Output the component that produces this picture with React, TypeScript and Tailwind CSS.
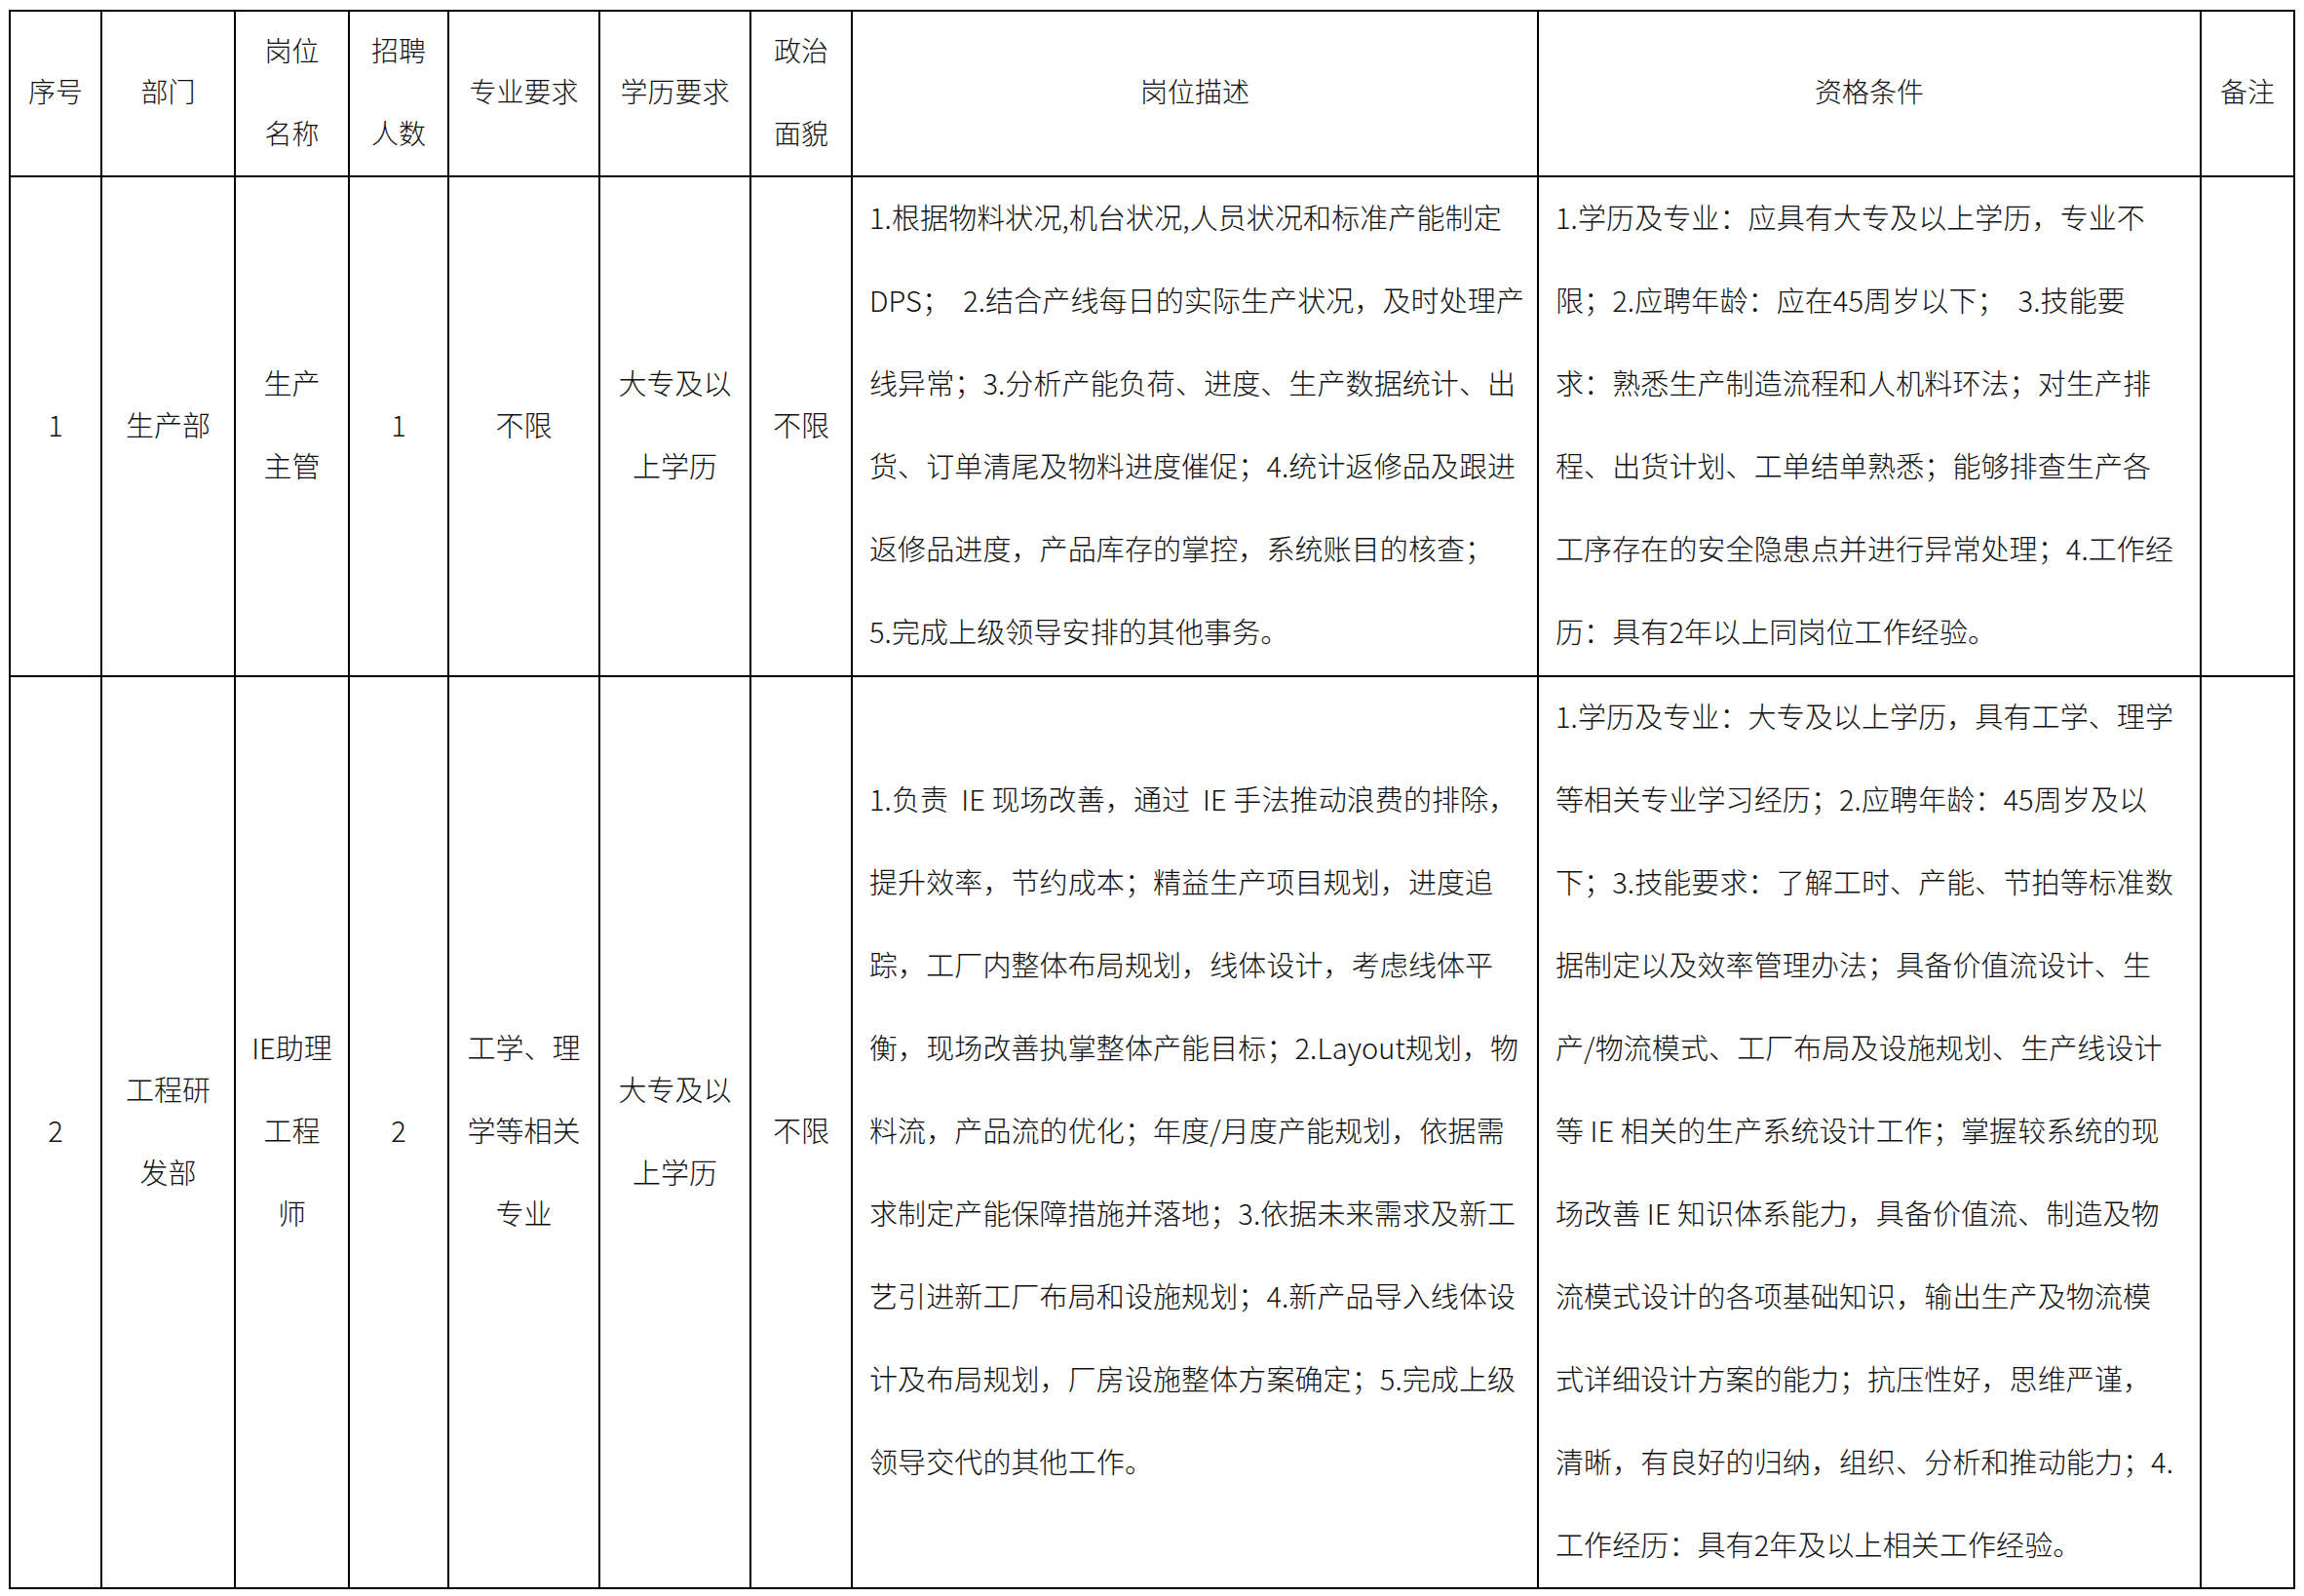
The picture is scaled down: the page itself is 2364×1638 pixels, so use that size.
const headers: { lines: string[] }[] = [
  { lines: ["序号"] },
  { lines: ["部门"] },
  { lines: ["岗位", "名称"] },
  { lines: ["招聘", "人数"] },
  { lines: ["专业要求"] },
  { lines: ["学历要求"] },
  { lines: ["政治", "面貌"] },
  { lines: ["岗位描述"] },
  { lines: ["资格条件"] },
  { lines: ["备注"] },
];

const rows = [
  {
    h: "h-[513px]",
    cells: [
      ["1"],
      ["生产部"],
      ["生产", "主管"],
      ["1"],
      ["不限"],
      ["大专及以", "上学历"],
      ["不限"],
    ],
    desc: [
      "1.根据物料状况,机台状况,人员状况和标准产能制定",
      "DPS；  2.结合产线每日的实际生产状况，及时处理产",
      "线异常；3.分析产能负荷、进度、生产数据统计、出",
      "货、订单清尾及物料进度催促；4.统计返修品及跟进",
      "返修品进度，产品库存的掌控，系统账目的核查；",
      "5.完成上级领导安排的其他事务。",
    ],
    req: [
      "1.学历及专业：应具有大专及以上学历，专业不",
      "限；2.应聘年龄：应在45周岁以下；  3.技能要",
      "求：熟悉生产制造流程和人机料环法；对生产排",
      "程、出货计划、工单结单熟悉；能够排查生产各",
      "工序存在的安全隐患点并进行异常处理；4.工作经",
      "历：具有2年以上同岗位工作经验。",
    ],
  },
  {
    h: "h-[936px]",
    cells: [
      ["2"],
      ["工程研", "发部"],
      ["IE助理", "工程", "师"],
      ["2"],
      ["工学、理", "学等相关", "专业"],
      ["大专及以", "上学历"],
      ["不限"],
    ],
    desc: [
      "1.负责  IE 现场改善，通过  IE 手法推动浪费的排除，",
      "提升效率，节约成本；精益生产项目规划，进度追",
      "踪，工厂内整体布局规划，线体设计，考虑线体平",
      "衡，现场改善执掌整体产能目标；2.Layout规划，物",
      "料流，产品流的优化；年度/月度产能规划，依据需",
      "求制定产能保障措施并落地；3.依据未来需求及新工",
      "艺引进新工厂布局和设施规划；4.新产品导入线体设",
      "计及布局规划，厂房设施整体方案确定；5.完成上级",
      "领导交代的其他工作。",
    ],
    req: [
      "1.学历及专业：大专及以上学历，具有工学、理学",
      "等相关专业学习经历；2.应聘年龄：45周岁及以",
      "下；3.技能要求：了解工时、产能、节拍等标准数",
      "据制定以及效率管理办法；具备价值流设计、生",
      "产/物流模式、工厂布局及设施规划、生产线设计",
      "等 IE 相关的生产系统设计工作；掌握较系统的现",
      "场改善 IE 知识体系能力，具备价值流、制造及物",
      "流模式设计的各项基础知识，输出生产及物流模",
      "式详细设计方案的能力；抗压性好，思维严谨，",
      "清晰，有良好的归纳，组织、分析和推动能力；4.",
      "工作经历：具有2年及以上相关工作经验。",
    ],
  },
];

function Center({ lines, className }: { lines: string[]; className?: string }) {
  return (
    <div className={`flex flex-col items-center justify-center border-r-2 border-b-2 border-black pb-[5px] ${className ?? ""}`}>
      {lines.map((l, i) => (
        <div key={i} className="whitespace-pre leading-[85px]">{l}</div>
      ))}
    </div>
  );
}

function Para({ lines, h }: { lines: string[]; h: string }) {
  return (
    <div className={`flex flex-col justify-center border-r-2 border-b-2 border-black px-[17px] pb-[5px] ${h}`}>
      {lines.map((l, i) => (
        <div key={i} className="whitespace-pre leading-[85px]">{l}</div>
      ))}
    </div>
  );
}

export default function App() {
  return (
    <div className="bg-white pt-[10px] pl-[9px] font-['Noto_Sans_CJK_SC',sans-serif] text-[#111]">
      <div className="grid w-max grid-cols-[94px_137px_117px_102px_155px_155px_104px_704px_680px_96px] border-t-2 border-l-2 border-black">
        {headers.map((c, i) => (
          <Center key={i} lines={c.lines} className="h-[170px] text-[28px] font-light" />
        ))}
        {rows.map((r, ri) => (
          <div key={ri} className="contents">
            {r.cells.map((c, ci) => (
              <Center key={ci} lines={c} className={`${r.h} text-[29px] font-light`} />
            ))}
            <Para lines={r.desc} h={`${r.h} text-[29px] font-light tracking-[0.1px]`} />
            <Para lines={r.req} h={`${r.h} text-[29px] font-light tracking-[0.1px]`} />
            <Center lines={[]} className={r.h} />
          </div>
        ))}
      </div>
    </div>
  );
}
